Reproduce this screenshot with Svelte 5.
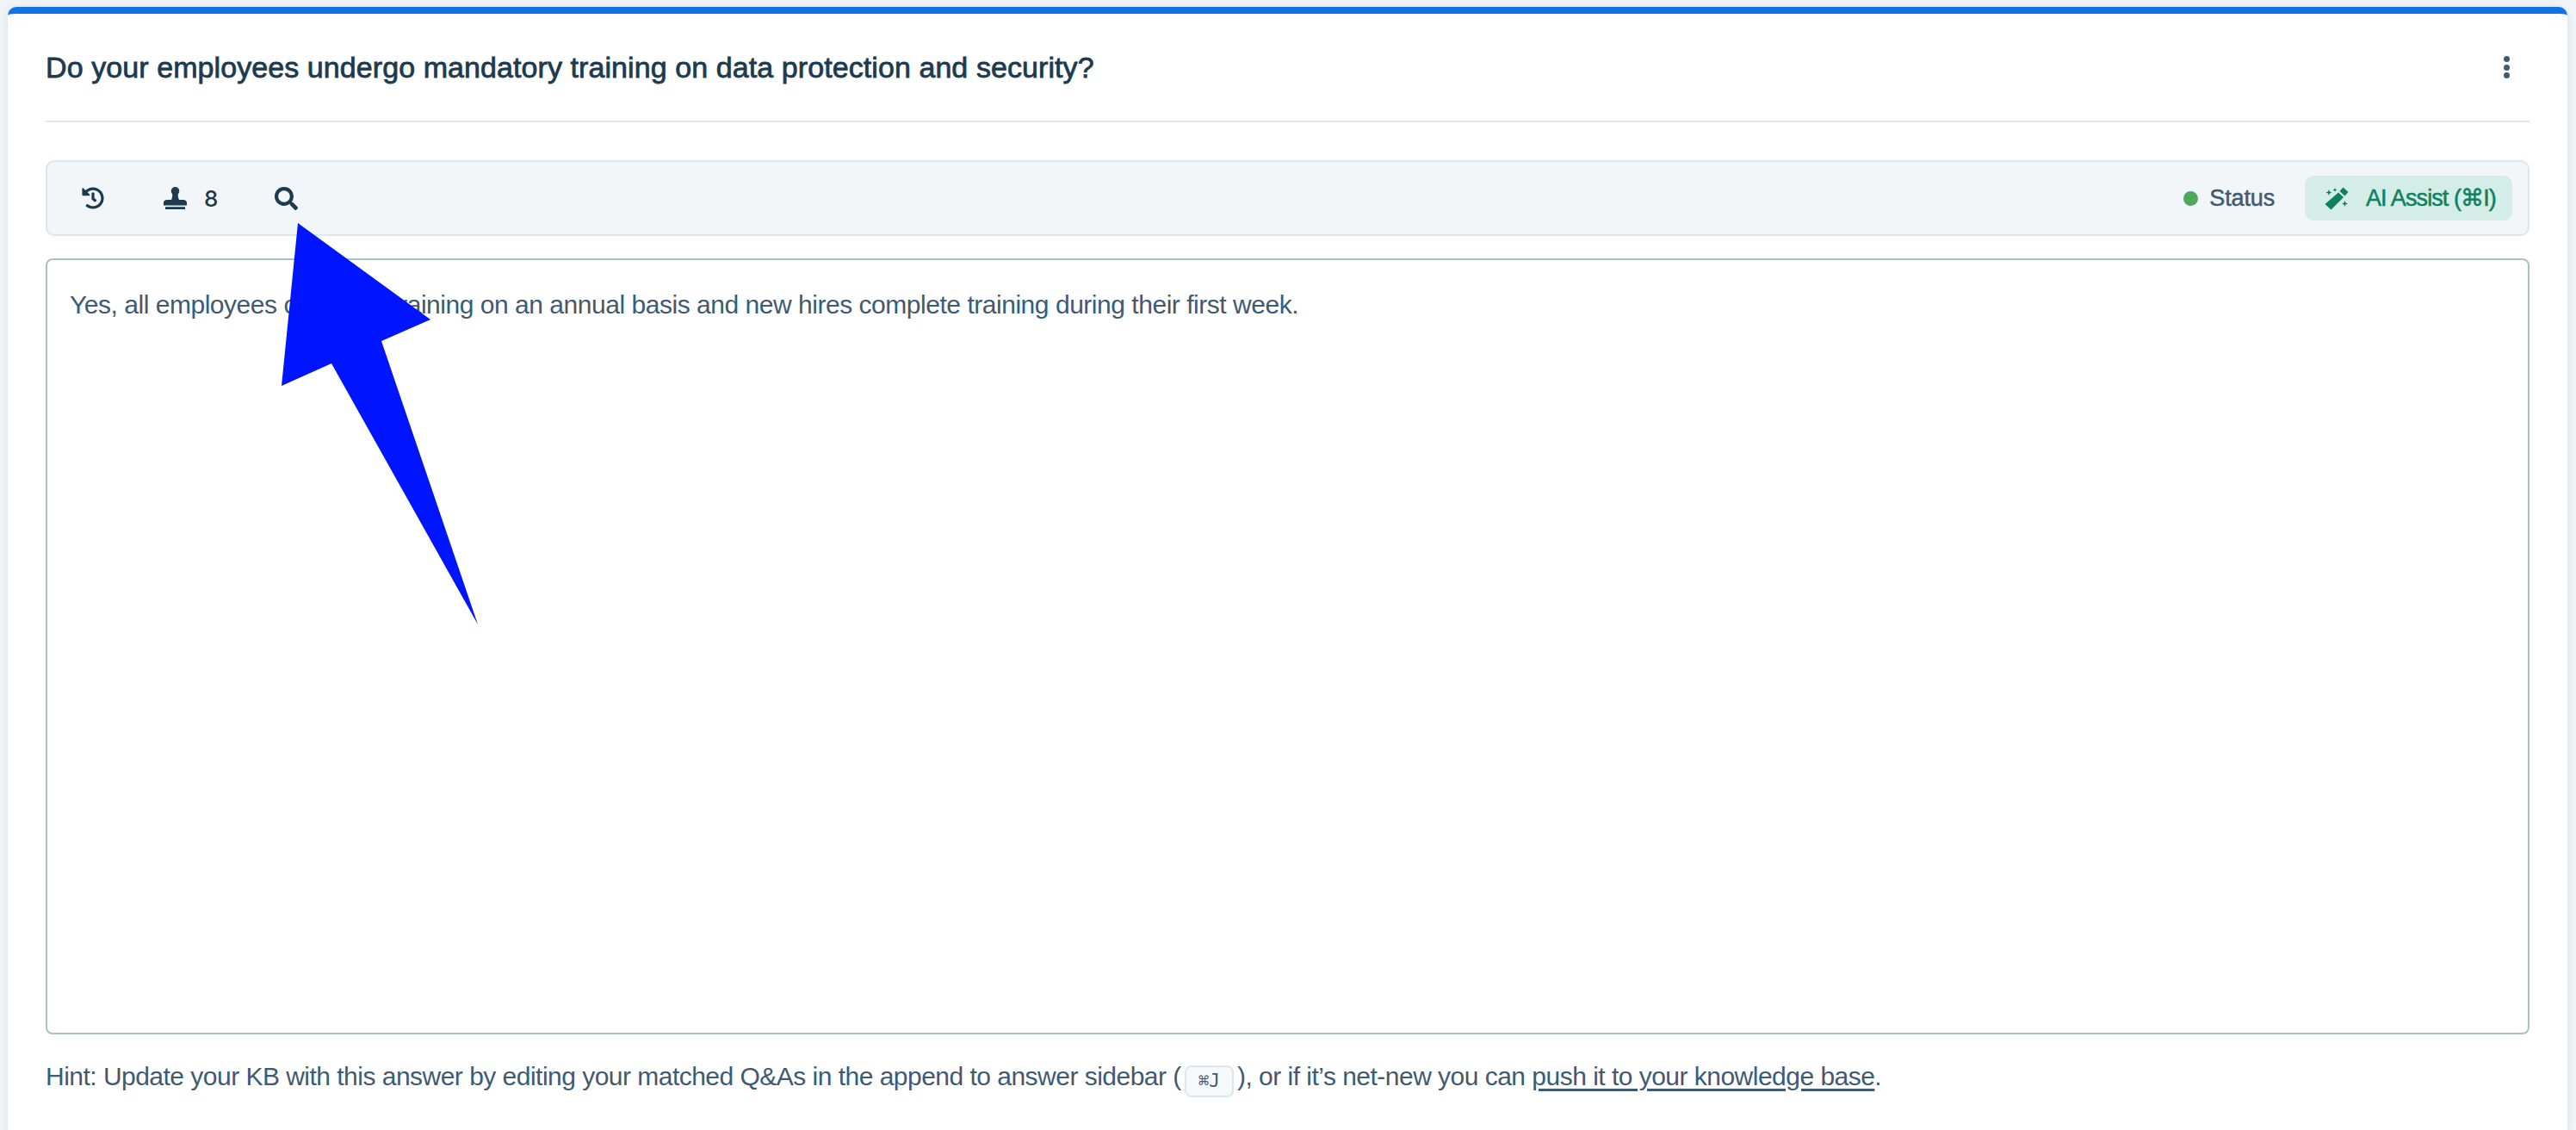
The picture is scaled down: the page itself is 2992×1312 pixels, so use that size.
<script lang="ts">
	let answer =
		'Yes, all employees complete training on an annual basis and new hires complete training during their first week.';
</script>

<div class="page">
	<section class="card">
		<header class="head">
			<h2>Do your employees undergo mandatory training on data protection and security?</h2>
			<button class="more" aria-label="More options">
				<span></span><span></span><span></span>
			</button>
		</header>

		<div class="toolbar">
			<div class="tools">
				<button class="tool" aria-label="History">
					<svg viewBox="0 0 512 512" width="26" height="26">
						<path
							d="M504 255.531c.253 136.64-111.18 248.372-247.82 248.468-59.015.042-113.223-20.53-155.822-54.911-11.077-8.94-11.905-25.541-1.839-35.607l11.267-11.267c8.609-8.609 22.353-9.551 31.891-1.984C173.062 425.135 212.781 440 256 440c101.705 0 184-82.311 184-184 0-101.705-82.311-184-184-184-48.814 0-93.149 18.969-126.068 49.932l50.754 50.754c10.08 10.08 2.941 27.314-11.313 27.314H24c-8.837 0-16-7.163-16-16V38.627c0-14.254 17.234-21.393 27.314-11.314l49.372 49.372C129.209 34.136 189.552 8 256 8c136.81 0 247.747 110.78 248 247.531zm-180.912 78.784l9.823-12.63c8.138-10.463 6.253-25.542-4.21-33.679L288 256.349V152c0-13.255-10.745-24-24-24h-16c-13.255 0-24 10.745-24 24v135.651l65.409 50.874c10.463 8.137 25.541 6.253 33.679-4.21z"
						/>
					</svg>
				</button>
				<button class="tool stamp" aria-label="Reviewers">
					<svg viewBox="0 0 27 26" width="27" height="26">
						<circle cx="13.5" cy="4.8" r="4.8" />
						<path d="M10.4 7h6.2c0 3.4.4 5.6 1.4 8h5c2.4 0 4 1.5 4 3.5v3H0v-3C0 16.5 1.6 15 4 15h5c1-2.4 1.4-4.6 1.4-8z" />
						<rect x="2" y="23.2" width="23" height="2.8" />
					</svg>
					<span>8</span>
				</button>
				<button class="tool" aria-label="Search">
					<svg viewBox="0 0 512 512" width="27" height="27">
						<path
							d="M505 442.7L405.3 343c-4.5-4.5-10.6-7-17-7H372c27.6-35.3 44-79.7 44-128C416 93.1 322.9 0 208 0S0 93.1 0 208s93.1 208 208 208c48.3 0 92.7-16.4 128-44v16.3c0 6.4 2.5 12.5 7 17l99.7 99.7c9.4 9.4 24.6 9.4 33.9 0l28.3-28.3c9.4-9.4 9.4-24.6.1-34zM208 336c-70.7 0-128-57.2-128-128 0-70.7 57.2-128 128-128 70.7 0 128 57.2 128 128 0 70.7-57.2 128-128 128z"
						/>
					</svg>
				</button>
			</div>
			<div class="actions">
				<span class="status"><i></i>Status</span>
				<button class="assist">
					<svg viewBox="0 0 28 27" width="28" height="27">
						<path d="M21.5 .5l6 5.5-4 4.4-6-5.5zM16 6.5l6 5.5L7.5 26.5 .5 20z" />
						<path d="M5 3l1 2.5 2.5 1-2.5 1L5 10 4 7.5l-2.5-1L4 5.5zM12 1l.7 1.8 1.8.7-1.8.7L12 6l-.7-1.8-1.8-.7 1.8-.7zM23.5 16l1 2.5 2.5 1-2.5 1-1 2.5-1-2.5-2.5-1 2.500-1z" />
					</svg>
					AI Assist (⌘I)
				</button>
			</div>
		</div>

		<div class="answer">{answer}</div>

		<p class="hint">
			Hint: Update your KB with this answer by editing your matched Q&amp;As in the append to answer sidebar
			(<kbd>⌘J</kbd>), or if it’s net-new you can <a href="#kb">push it to your knowledge base</a>.
		</p>
	</section>

	<svg class="pointer" viewBox="0 0 2992 1312" width="2992" height="1312" aria-hidden="true">
		<polygon points="346,259 500,371 443,396 555,725 385,422 327,448" />
	</svg>
</div>

<style>
	:global(body) {
		margin: 0;
		background: #f0f4f7;
	}
	.page {
		position: relative;
		height: 1312px;
		overflow: hidden;
		padding: 8px 10px 0 9px;
		box-sizing: border-box;
		font-family: 'Liberation Sans', Arial, sans-serif;
		color: #3f5a72;
	}
	.card {
		height: 1304px;
		box-sizing: border-box;
		background: #fff;
		border-top: 8px solid #1273e3;
		border-radius: 10px 10px 0 0;
		padding: 0 44px;
		display: flex;
		flex-direction: column;
		box-shadow: 0 2px 8px rgba(40, 70, 100, 0.12);
	}
	.head {
		height: 126px;
		flex: none;
		box-sizing: border-box;
		display: flex;
		align-items: center;
		justify-content: space-between;
		border-bottom: 2px solid #dde6ec;
		margin-bottom: 44px;
	}
	h2 {
		margin: 0;
		font-size: 34px;
		font-weight: 400;
		letter-spacing: 0.08px;
		-webkit-text-stroke: 0.8px #1c3a50;
		color: #1c3a50;
	}
	.more {
		display: flex;
		flex-direction: column;
		gap: 2.5px;
		background: none;
		border: 0;
		padding: 0;
		margin-right: 23px;
	}
	.more span {
		width: 7px;
		height: 7px;
		border-radius: 50%;
		background: #3f5a72;
	}
	.toolbar {
		height: 88px;
		flex: none;
		box-sizing: border-box;
		display: flex;
		align-items: center;
		justify-content: space-between;
		background: #f2f6f9;
		border: 2px solid #dde6ec;
		border-radius: 10px;
		padding: 0 18px 0 40px;
		margin-bottom: 26px;
	}
	.tools,
	.actions {
		display: flex;
		align-items: center;
	}
	.tools {
		gap: 66px;
	}
	.tool {
		display: flex;
		align-items: center;
		gap: 20px;
		background: none;
		border: 0;
		padding: 0;
		font: 500 26px 'Inter', sans-serif;
		color: #1c3a50;
	}
	.tool svg {
		display: block;
		fill: #1c3a50;
	}
	.stamp {
		margin-left: 3px;
	}
	.status {
		display: flex;
		align-items: center;
		gap: 13px;
		font-size: 27px;
		letter-spacing: -0.15px;
		-webkit-text-stroke: 0.5px #3f5a72;
		margin-right: 35px;
	}
	.status i {
		width: 17px;
		height: 17px;
		border-radius: 50%;
		background: #4ea85c;
	}
	.assist {
		height: 52px;
		width: 241px;
		box-sizing: border-box;
		display: flex;
		align-items: center;
		gap: 20px;
		padding: 0 0 0 23px;
		border: 0;
		border-radius: 10px;
		background: #d4ede7;
		color: #0f8060;
		font: 400 27px 'Liberation Sans', sans-serif;
		letter-spacing: -0.9px;
		-webkit-text-stroke: 0.5px #0f8060;
		white-space: nowrap;
	}
	.assist svg {
		fill: #0f8060;
		flex: none;
		margin-top: 1px;
	}
	.answer {
		flex: none;
		height: 901px;
		box-sizing: border-box;
		border: 2px solid #adbecb;
		border-radius: 8px;
		padding: 35px 26px;
		font-size: 30px;
		line-height: 34px;
		letter-spacing: -0.47px;
	}
	.hint {
		margin: 29px 0 0;
		font-size: 30px;
		line-height: 40px;
		letter-spacing: -0.52px;
		white-space: nowrap;
	}
	kbd {
		display: inline-block;
		box-sizing: border-box;
		height: 37px;
		line-height: 33px;
		padding: 0 14px;
		margin: 0 4px;
		border: 2px solid #dde6ec;
		border-radius: 8px;
		background: #f6f9fb;
		font-family: 'DejaVu Sans Mono', monospace;
		font-size: 21px;
		letter-spacing: 0;
		vertical-align: -2px;
	}
	a {
		color: inherit;
		text-decoration: underline;
		text-decoration-thickness: 3px;
		text-underline-offset: 4px;
	}
	.pointer {
		position: absolute;
		left: 0;
		top: 0;
		pointer-events: none;
	}
	.pointer polygon {
		fill: #0015ff;
	}
</style>
